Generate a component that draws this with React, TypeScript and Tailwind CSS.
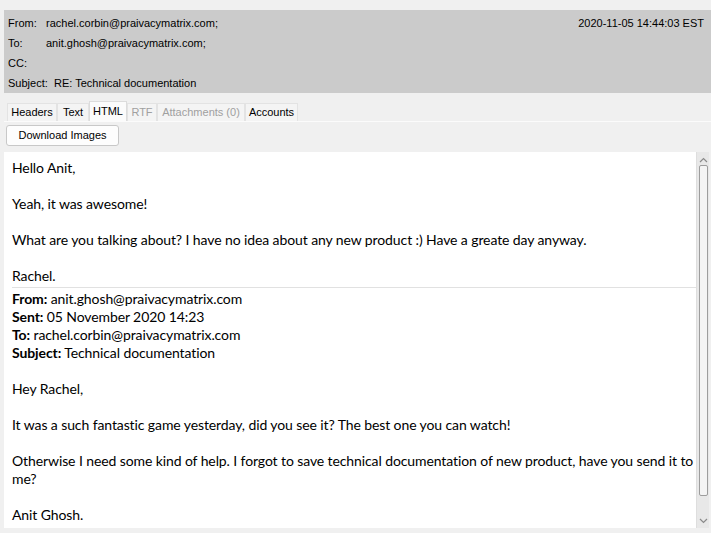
import React from "react";

const ui = { fontFamily: '"Liberation Sans", Arial, sans-serif' };
const body = { fontFamily: 'Lato, "Open Sans", sans-serif' };

const tabs = [
  { label: "Headers", w: "w-[50px]" },
  { label: "Text", w: "w-[32px]" },
  { label: "HTML", w: "w-[38px]", active: true },
  { label: "RTF", w: "w-[30px]", disabled: true },
  { label: "Attachments (0)", w: "w-[88px]", disabled: true },
  { label: "Accounts", w: "w-[53px]" },
];

function HeaderRow({ label, value, width = "w-[38px]" }: { label: string; value: string; width?: string }) {
  return (
    <div className="flex h-[20px] items-center">
      <span className={`${width} shrink-0`}>{label}</span>
      <span>{value}</span>
    </div>
  );
}

export default function App() {
  return (
    <div className="flex h-[533px] w-[711px] flex-col overflow-hidden bg-[#f0f0f0] text-[#000]" style={ui}>
      <div className="mt-[10px] ml-[4px] flex h-[83px] bg-[#cbcbcb] px-[4px] pt-[3px] text-[11px]">
        <div className="flex-1">
          <HeaderRow label="From:" value="rachel.corbin@praivacymatrix.com;" />
          <HeaderRow label="To:" value="anit.ghosh@praivacymatrix.com;" />
          <HeaderRow label="CC:" value="" />
          <HeaderRow label="Subject:" value="RE: Technical documentation" width="w-[46px]" />
        </div>
        <div className="flex h-[20px] items-center pr-[3px]">2020-11-05 14:44:03 EST</div>
      </div>

      <div className="mt-[9px] ml-[7px] flex h-[19px] items-end text-[11px]">
        {tabs.map((t) => (
          <div
            key={t.label}
            className={`${t.w} flex items-center justify-center border border-b-0 ${
              t.active
                ? "h-[20px] border-[#dcdcdc] bg-[#fbfbfb]"
                : "h-[18px] border-[#e3e3e3] bg-[#f4f4f4]"
            } ${t.disabled ? "text-[#a0a0a0]" : "text-[#000]"}`}
          >
            {t.label}
          </div>
        ))}
      </div>
      <div className="ml-[4px] h-px bg-[#fbfbfb]" />

      <div className="ml-[6px] mt-[3px]">
        <button
          className="flex h-[21px] w-[113px] items-center justify-center rounded-[3px] border border-[#c8c8c8] bg-[#fdfdfd] text-[11px]"
          style={ui}
        >
          Download Images
        </button>
      </div>

      <div className="mt-[6px] ml-[4px] mb-[5px] flex min-h-0 flex-1">
        <div
          className="flex-1 overflow-hidden bg-white pl-[8px] pt-[7px] text-[14px] leading-[18px] tracking-[-0.1px] text-[#000]"
          style={body}
        >
          <p>Hello Anit,</p>
          <p className="mt-[18px]">Yeah, it was awesome!</p>
          <p className="mt-[18px]">What are you talking about? I have no idea about any new product :) Have a greate day anyway.</p>
          <p className="mt-[18px]">Rachel.</p>
          <div className="mt-[2px] border-t border-[#e1e1e1] pt-[2px]">
            <p><b>From:</b> anit.ghosh@praivacymatrix.com</p>
            <p><b>Sent:</b> 05 November 2020 14:23</p>
            <p><b>To:</b> rachel.corbin@praivacymatrix.com</p>
            <p><b>Subject:</b> Technical documentation</p>
          </div>
          <p className="mt-[18px]">Hey Rachel,</p>
          <p className="mt-[18px]">It was a such fantastic game yesterday, did you see it? The best one you can watch!</p>
          <p className="mt-[18px]">Otherwise I need some kind of help. I forgot to save technical documentation of new product, have you send it to me?</p>
          <p className="mt-[18px]">Anit Ghosh.</p>
        </div>

        <div className="mr-[2px] flex w-[13px] flex-col items-center border-l border-[#dedede] bg-[#e8e8e8]">
          <svg width="9" height="6" viewBox="0 0 9 6" className="mt-[5px]">
            <path d="M1 5 L4.5 1.5 L8 5" fill="none" stroke="#8a8a8a" strokeWidth="1.2" />
          </svg>
          <div className="mt-[2px] h-[331px] w-[9px] rounded-[2px] border border-[#9d9d9d] bg-[#f4f4f4]" />
          <div className="flex-1" />
          <svg width="9" height="6" viewBox="0 0 9 6" className="mb-[4px]">
            <path d="M1 1 L4.5 4.5 L8 1" fill="none" stroke="#8a8a8a" strokeWidth="1.2" />
          </svg>
        </div>
      </div>
    </div>
  );
}
